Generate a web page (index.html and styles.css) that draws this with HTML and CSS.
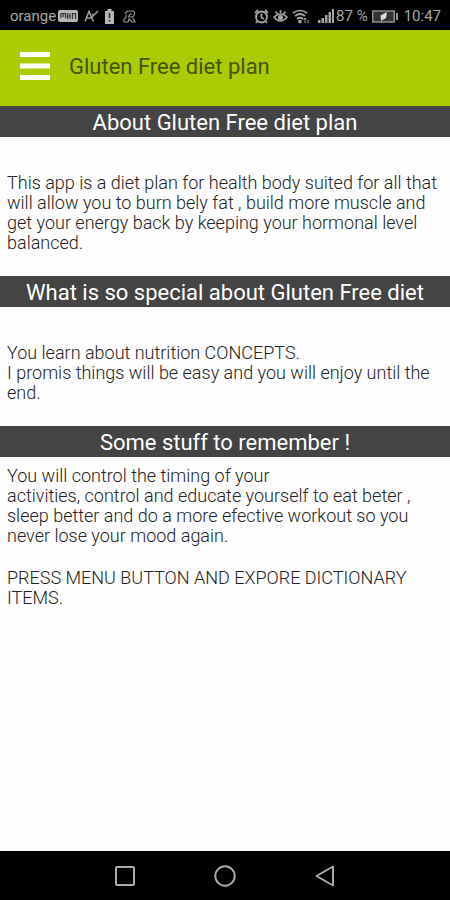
FILE: index.html
```html
<!DOCTYPE html>
<html lang="en">
<head>
<meta charset="utf-8">
<meta name="viewport" content="width=device-width, initial-scale=1">
<title>Gluten Free diet plan</title>
<link rel="stylesheet" href="styles.css">
</head>
<body>
<div class="status">
  <div class="status-group">
    <span>orange</span>
    <svg class="gap-xs" width="20" height="14" viewBox="0 0 20 14"><rect x="0" y="1" width="20" height="12" rx="2" fill="#b5b5b5"/><path d="M3 9V4.500H7.500V9M5.200 5V8M9.500 4V10M9.500 7H12M12 4V10M14.500 10V4.500H17.500V10" fill="none" stroke="#333" stroke-width="1.200"/></svg>
    <svg class="gap-m" width="15" height="14" viewBox="0 0 15 14" fill="none" stroke="#a0a0a0" stroke-width="1.500"><path d="M1 12.500L5 2.500L9.500 12.500M3 9H7L14 2M8 5L10 6.500"/></svg>
    <svg class="gap-m" width="9" height="15" viewBox="0 0 9 15"><path d="M2.500 0H6.500V2H9V15H0V2H2.500Z" fill="#b5b5b5"/><path d="M4.500 4V9M4.500 11V12.500" stroke="#222" stroke-width="1.500"/></svg>
    <svg class="gap-l" width="13" height="13" viewBox="0 0 13 13" fill="none" stroke="#929292" stroke-width="1.200"><path d="M2 4Q3 1 6 1H9Q12 1 11.500 4Q11 7 8 7H5.500L7 4H9M1 12Q0 9 2.500 8L3.500 5M1 12H5L6 9L9 12H12L10 8"/></svg>
  </div>
  <div class="status-group">
    <svg width="15" height="15" viewBox="0 0 15 15" fill="none" stroke="#a5a5a5" stroke-width="1.800"><circle cx="7.500" cy="8" r="5.500"/><path d="M1 4L4 1M11 1L14 4M7.500 4.500V8.500L10 10M3.500 12L2 14M11.500 12L13 14"/></svg>
    <svg class="gap-s" width="15" height="15" viewBox="0 0 15 15" fill="none" stroke="#a5a5a5" stroke-width="1.600"><path d="M1 8Q7.500 2 14 8Q7.500 16 1 8ZM7.500 1V4M2.500 2.500L4.500 5M12.500 2.500L10.500 5"/><circle cx="7.500" cy="8.500" r="1.800" fill="#a5a5a5"/></svg>
    <svg class="gap-s" width="17" height="15" viewBox="0 0 17 15" fill="none" stroke="#a5a5a5" stroke-width="1.700"><path d="M1 4Q8 -1 15 4M3 7Q8 3 13 7M5 10Q8 7.500 11 10"/><circle cx="8" cy="12.500" r="1" fill="#a5a5a5"/><path d="M13 9V14M11.500 10.500L13 9L14.500 10.500M16 11V14" stroke-width="1"/></svg>
    <svg class="gap-l" width="16" height="14" viewBox="0 0 16 14" fill="#a5a5a5"><path d="M0 11H2.500V14H0ZM3.500 9H6V14H3.500ZM7 6H9.500V14H7ZM10.500 3H13V14H10.500ZM14 0H16V14H14Z"/></svg>
    <span class="gap-xs">87 %</span>
    <svg class="gap-s" width="26" height="13" viewBox="0 0 26 13"><path d="M.75 1H22.250V12H.75Z" fill="#333" stroke="#8f8f8f" stroke-width="1.500"/><path d="M24 3H26V10H24Z" fill="#8f8f8f"/><path d="M15 2L8.500 5.500L9 11L14 8Z" fill="#ddd"/></svg>
    <span class="gap-m">10:47</span>
  </div>
</div>
<header class="appbar">
  <button class="menu" type="button" aria-label="Menu"><svg width="30" height="28" viewBox="0 0 30 28" fill="#fff"><rect width="30" height="5"/><rect y="11.500" width="30" height="5"/><rect y="23" width="30" height="5"/></svg></button>
  <h1 class="title">Gluten Free diet plan</h1>
</header>
<main class="content">
  <section>
    <h2 class="heading">About Gluten Free diet plan</h2>
    <p class="text spaced">This app is a diet plan for health body suited for all that<br>will allow you to burn bely fat , build more muscle and<br>get your energy back by keeping your hormonal level<br>balanced.</p>
  </section>
  <section>
    <h2 class="heading">What is so special about Gluten Free diet</h2>
    <p class="text spaced">You learn about nutrition CONCEPTS.<br>I promis things will be easy and you will enjoy until the<br>end.</p>
  </section>
  <section>
    <h2 class="heading">Some stuff to remember !</h2>
    <p class="text">You will control the timing of your<br>activities, control and educate yourself to eat beter ,<br>sleep better and do a more efective workout so you<br>never lose your mood again.</p>
    <p class="text note">PRESS MENU BUTTON AND EXPORE DICTIONARY<br>ITEMS.</p>
  </section>
</main>
<nav class="navbar" aria-label="System">
  <button type="button" aria-label="Recent apps"><svg width="22" height="22" viewBox="0 0 22 22"><rect x="2" y="2" width="18" height="18" rx="1"/></svg></button>
  <button type="button" aria-label="Home"><svg width="22" height="22" viewBox="0 0 22 22"><circle cx="11" cy="11" r="9.700"/></svg></button>
  <button type="button" aria-label="Back"><svg width="22" height="22" viewBox="0 0 22 22"><path d="M19 1.500V20.500L2.500 11Z" stroke-linejoin="round"/></svg></button>
</nav>
</body>
</html>
```
FILE: styles.css
```css
* {
  box-sizing: border-box;
}

body {
  display: flex;
  flex-direction: column;
  min-height: 100vh;
  margin: 0;
  background: #fefefe;
  color: #222;
  font-family: Roboto, "Liberation Sans", sans-serif;
}

h1, h2, p {
  margin: 0;
  font-weight: 400;
}

button {
  display: flex;
  padding: 0;
  border: 0;
  background: none;
}

.status {
  display: flex;
  justify-content: space-between;
  height: 30px;
  padding: 2px 9px 0 10px;
  background: #000;
  color: #a8a8a8;
  font-size: 15px;
}

.status-group {
  display: flex;
  align-items: center;
  white-space: nowrap;
}

.gap-xs { margin-left: 2px; }
.gap-s { margin-left: 4px; }
.gap-m { margin-left: 6px; }
.gap-l { margin-left: 9px; }

.appbar {
  display: flex;
  align-items: center;
  gap: 19px;
  height: 76px;
  padding: 0 20px 4px;
  background: #aacc04;
}

.title {
  color: #46540f;
  font-size: 22px;
}

.content {
  flex: 1;
}

.heading {
  height: 31px;
  background: #444;
  color: #fff;
  font-size: 22px;
  line-height: 34px;
  text-align: center;
}

.text {
  padding: 9px 7px 0;
  font-size: 18px;
  font-weight: 300;
  line-height: 20px;
}

.spaced {
  padding-top: 36px;
  padding-bottom: 23px;
}

.note {
  padding-top: 22px;
}

.navbar {
  display: flex;
  justify-content: center;
  align-items: center;
  gap: 78px;
  height: 49px;
  background: #000;
}

.navbar svg {
  fill: none;
  stroke: #aaa;
  stroke-width: 2;
}
```
